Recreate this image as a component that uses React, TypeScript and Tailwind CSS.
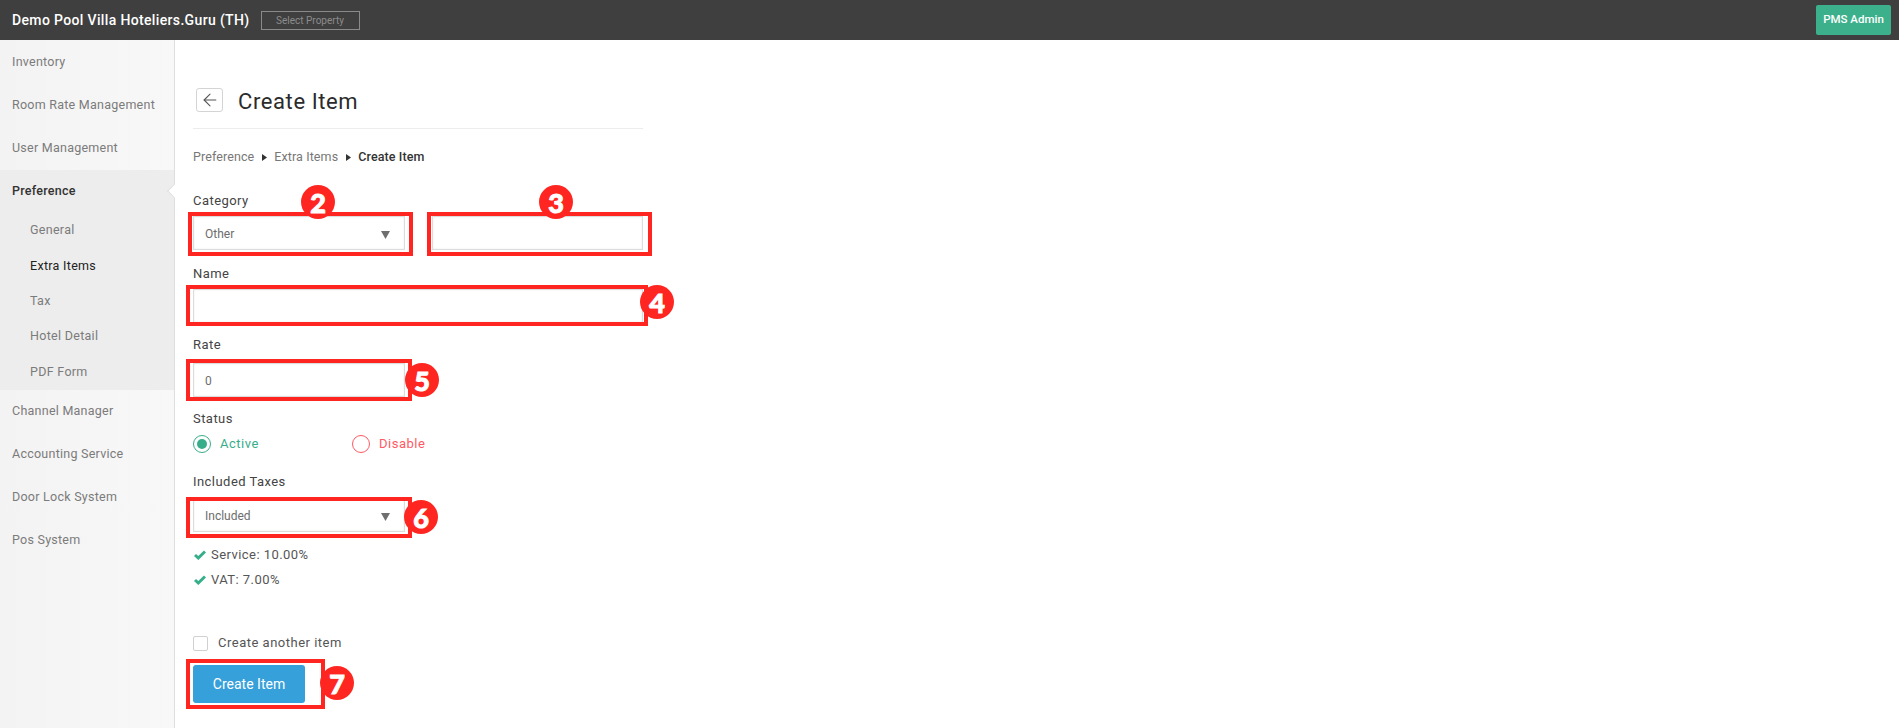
import { ArrowLeft } from "lucide-react";
import type { ReactNode } from "react";

const sideLink = "h-[43px] flex items-center pl-3 whitespace-nowrap";
const subLink = "h-[35.4px] flex items-center pl-[30px] text-[12.5px] tracking-[0.3px]";
const label = "h-5 flex items-center text-[13px] tracking-[0.45px] text-[#444]";
const field = "h-[34px] border border-[#dcdcdc] shadow-[inset_0_0_2px_#e8e8e8] bg-white flex items-center justify-between pt-[2px] pl-[11px] pr-[14px] text-xs text-[#6d6d6d]";

function Badge({ n, className }: { n: number; className: string }) {
  return (
    <span className={`absolute z-10 w-[34px] h-[34px] rounded-full bg-[#ff2621] text-white flex items-center justify-center text-[27px] leading-none font-black font-['Lato',sans-serif] [-webkit-text-stroke:1px_white] ${className}`}>
      {n}
    </span>
  );
}

// red annotation frame drawn around a form control
function Marked({ n, frame, badge, children }: { n: number; frame: string; badge: string; children: ReactNode }) {
  return (
    <div className="relative">
      {children}
      <div className={`absolute border-4 border-[#ff2621] pointer-events-none ${frame}`} />
      <Badge n={n} className={badge} />
    </div>
  );
}

function Caret() {
  return (
    <svg width="9" height="8" viewBox="0 0 9 8" className="mt-px">
      <polygon points="0,0 9,0 4.5,8" fill="#6f6f6f" />
    </svg>
  );
}

function Tick({ text }: { text: string }) {
  return (
    <div className="h-[25px] flex items-center gap-[5px] text-[13px] tracking-[0.45px] text-[#555]">
      <svg width="12" height="10" viewBox="0 0 12 10">
        <path d="M1 5 L4.3 8 L11 1.5" fill="none" stroke="#37ae8a" strokeWidth="3" />
      </svg>
      {text}
    </div>
  );
}

function SideItem({ text }: { text: string }) {
  return <div className={`${sideLink} text-[12.5px] tracking-[0.25px] text-[#7b7b7b]`}>{text}</div>;
}

function SubItem({ text, active }: { text: string; active?: boolean }) {
  return <div className={`${subLink} ${active ? "text-[#222]" : "text-[#7b7b7b]"}`}>{text}</div>;
}

export default function App() {
  return (
    <div className="h-screen overflow-hidden flex flex-col bg-white font-['Roboto',sans-serif]">
      <header className="h-10 shrink-0 bg-[#3f3f3f] flex items-center pl-3 pr-2">
        <span className="text-[14px] font-medium tracking-[0.35px] text-white">Demo Pool Villa Hoteliers.Guru (TH)</span>
        <span className="ml-[11px] w-[99px] h-[19px] border border-[#8a8a8a] flex items-center justify-center text-[10px] text-[#8c8c8c]">Select Property</span>
        <span className="ml-auto w-[75px] h-[30px] rounded-[2px] bg-[#3bb08b] flex items-center justify-center text-[11.5px] font-medium text-white">PMS Admin</span>
      </header>

      <div className="flex flex-1 min-h-0">
        <aside className="w-[175px] shrink-0 border-r border-[#dedede] bg-gradient-to-r from-[#f3f3f3] to-[#f8f8f8] pt-px">
          <SideItem text="Inventory" />
          <SideItem text="Room Rate Management" />
          <SideItem text="User Management" />
          <div className="relative h-[220px] bg-[#ededed]">
            <div className={`${sideLink} text-[12.5px] font-medium tracking-[0.25px] text-[#333]`}>Preference</div>
            <span className="absolute right-[-5px] top-[16px] w-[10px] h-[10px] rotate-45 bg-white border-l border-b border-[#dedede]" />
            <div>
              <SubItem text="General" />
              <SubItem text="Extra Items" active />
              <SubItem text="Tax" />
              <SubItem text="Hotel Detail" />
              <SubItem text="PDF Form" />
            </div>
          </div>
          <SideItem text="Channel Manager" />
          <SideItem text="Accounting Service" />
          <SideItem text="Door Lock System" />
          <SideItem text="Pos System" />
        </aside>

        <main className="flex-1 pl-[18px] pt-12">
          <div className="w-[450px]">
            <div className="h-[41px] border-b border-[#ececec] flex items-start pl-[3px]">
              <button className="w-[27px] h-6 rounded-[3px] border border-[#d4d4d4] flex items-center justify-center text-[#555]">
                <ArrowLeft size={20} strokeWidth={1.3} />
              </button>
              <h1 className="ml-[15px] h-[26px] flex items-center text-[22px] tracking-[0.6px] text-[#2b2b2b]">Create Item</h1>
            </div>

            <nav className="mt-[18px] h-5 flex items-center text-[12.5px] tracking-[0.1px] text-[#777]">
              Preference
              <svg width="5" height="7" viewBox="0 0 5 7" className="mx-[7.5px]"><polygon points="0,0 5,3.5 0,7" fill="#333" /></svg>
              Extra Items
              <svg width="5" height="7" viewBox="0 0 5 7" className="mx-[7.5px]"><polygon points="0,0 5,3.5 0,7" fill="#333" /></svg>
              <span className="font-medium text-[#333]">Create Item</span>
            </nav>

            <div className={`mt-[24px] ${label}`}>Category</div>
            <div className="mt-[5px] flex gap-[27px]">
              <div className="w-[212px]">
                <Marked n={2} frame="-left-[5px] -right-[8px] -top-1 -bottom-[6px]" badge="left-[108px] -top-[31px]">
                  <div className={field}>Other<Caret /></div>
                </Marked>
              </div>
              <div className="w-[211px]">
                <Marked n={3} frame="-left-[5px] -right-[9px] -top-1 -bottom-[6px]" badge="left-[107px] -top-[31px]">
                  <div className={field} />
                </Marked>
              </div>
            </div>

            <div className={`mt-[14px] ${label}`}>Name</div>
            <div className="mt-[5px]">
              <Marked n={4} frame="-left-[7px] -right-[5px] -top-1 -bottom-[3px]" badge="left-[447px] -top-1">
                <div className={field} />
              </Marked>
            </div>

            <div className={`mt-[12px] ${label}`}>Rate</div>
            <div className="mt-[8px] w-[212px]">
              <Marked n={5} frame="-left-[7px] -right-[7px] -top-1 -bottom-[4px]" badge="left-[212px] top-0">
                <div className={field}>0</div>
              </Marked>
            </div>

            <div className={`mt-[12px] ${label}`}>Status</div>
            <div className="mt-[6px] h-[18px] flex items-center">
              <div className="w-[159px] flex items-center gap-[9px] text-[13px] tracking-[0.5px] text-[#37ae8a]">
                <span className="w-[18px] h-[18px] rounded-full border border-[#37ae8a] flex items-center justify-center">
                  <span className="w-[10px] h-[10px] rounded-full bg-[#37ae8a]" />
                </span>
                Active
              </div>
              <div className="flex items-center gap-[9px] text-[13px] tracking-[0.5px] text-[#ff5a64]">
                <span className="w-[18px] h-[18px] rounded-full border border-[#ff5a64]" />
                Disable
              </div>
            </div>

            <div className={`mt-[19px] ${label}`}>Included Taxes</div>
            <div className="mt-[6px] w-[212px]">
              <Marked n={6} frame="-left-[7px] -right-[7px] -top-[1px] -bottom-[6px]" badge="left-[211px] top-[2px]">
                <div className={field}>Included<Caret /></div>
              </Marked>
            </div>

            <div className="mt-[10px] pl-[1px]">
              <Tick text="Service: 10.00%" />
              <Tick text="VAT: 7.00%" />
            </div>

            <div className="mt-[41px] h-5 flex items-center gap-[10px] text-[13px] tracking-[0.5px] text-[#555]">
              <span className="w-[15px] h-[15px] rounded-[2px] border border-[#d0d0d0]" />
              Create another item
            </div>
            <div className="mt-[12px] w-[112px]">
              <Marked n={7} frame="-left-[7px] -right-[20px] -top-[6px] -bottom-[6px]" badge="left-[127px] top-[1px]">
                <button className="w-[112px] h-[38px] rounded-[3px] bg-[#36a0da] text-[14px] text-white">Create Item</button>
              </Marked>
            </div>
          </div>
        </main>
      </div>
    </div>
  );
}
